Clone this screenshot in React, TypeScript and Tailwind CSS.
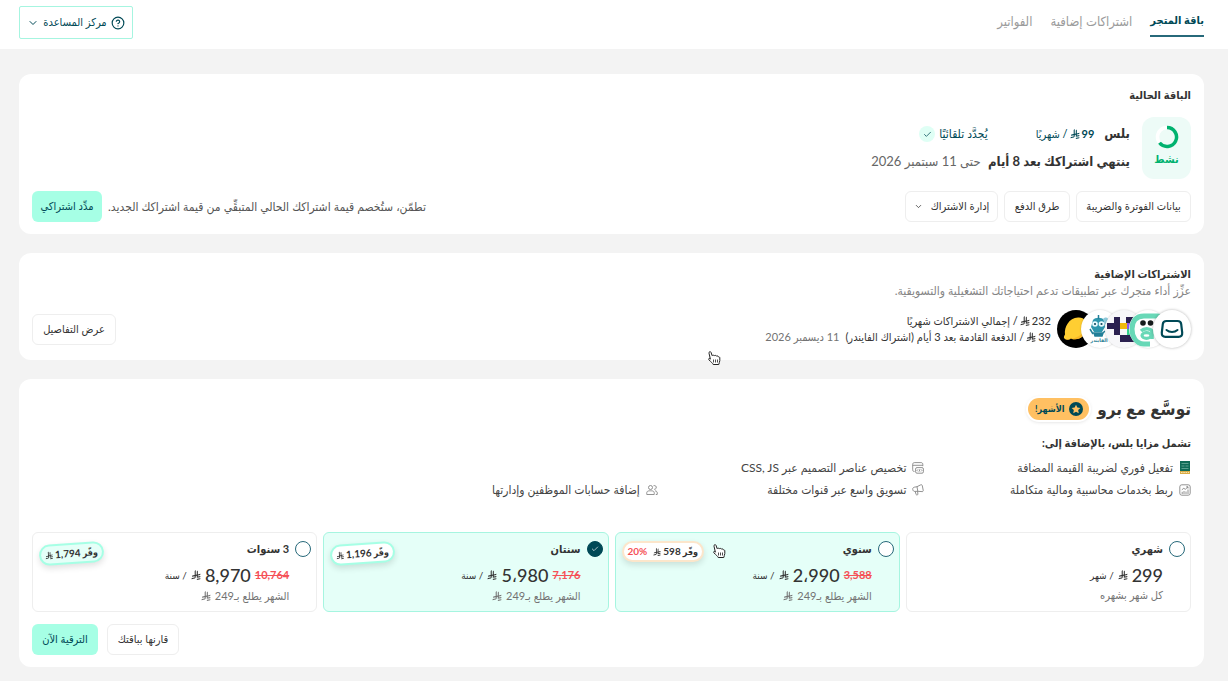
import { useState } from 'react';
import type { ReactNode } from 'react';
import clsx from 'clsx';
import { Check, ChevronDown, CircleHelp } from 'lucide-react';

type Plan = {
  id: string;
  name: string;
  price: string;
  oldPrice?: string;
  unit: string;
  note: ReactNode;
  saving?: string;
  discount?: string;
};

function Riyal({ className }: { className?: string }) {
  return (
    <svg viewBox="0 0 1124 1257" fill="currentColor" aria-hidden="true" className={clsx('inline-block shrink-0', className)}>
      <path d="M699.62,1113.02c-20.06,44.48-33.32,92.75-38.4,143.37l424.51-90.24c20.06-44.47,33.31-92.75,38.4-143.37l-424.51,90.24Z" />
      <path d="M1085.73,895.8c20.06-44.47,33.32-92.75,38.4-143.37l-330.68,70.33v-135.2l292.27-62.11c20.06-44.47,33.32-92.75,38.4-143.37l-330.68,70.27V66.13c-50.67,28.45-95.67,66.32-132.25,110.99v403.35l-132.25,28.11V0c-50.67,28.44-95.67,66.32-132.25,110.99v525.69l-295.91,62.88c-20.06,44.47-33.33,92.75-38.42,143.37l334.33-71.05v170.26l-358.3,76.14c-20.06,44.47-33.32,92.75-38.4,143.37l375.04-79.7c30.53-6.35,56.77-24.4,73.83-49.24l68.78-101.97v-.02c7.14-10.55,11.3-23.27,11.3-36.97v-149.98l132.25-28.11v270.4l424.53-90.28Z" />
    </svg>
  );
}

function HandPointer({ className }: { className?: string }) {
  return (
    <svg viewBox="0 0 14 16" aria-hidden="true" className={clsx('pointer-events-none absolute h-4 w-3.5', className)}>
      <path
        d="M3.4 9.2 2 3.2C1.7 1.6 3.6 1 4.1 2.5l1 3.2c.6-.8 1.8-.7 2.1.1.7-.7 1.8-.5 2.1.3.7-.5 1.8-.2 2 .7.8-.2 1.5.3 1.5 1.2v2.6c0 1.6-1 2.3-1 3.9H6.2c-.5-1.5-2.3-2.5-4.2-4.6-1-1.2.4-2.3 1.4-.7Z"
        fill="#fff"
        stroke="#222"
        strokeLinejoin="round"
      />
      <path d="M6.5 9.5v3M8.5 9.5v3M10.5 9.5v3" stroke="#222" strokeWidth=".8" />
    </svg>
  );
}

const avatar = 'h-[38px] w-[38px] shrink-0 rounded-full';

function AppLogos() {
  return (
    <div className="flex items-center">
      <svg viewBox="0 0 38 38" className={clsx(avatar, 'z-50 bg-white shadow-[0_0_3px_rgba(0,0,0,0.3)]')}>
        <path d="M13.5 11h11c2.500 0 3.500 1.200 3.700 3.200l1 8.400c.2 2.800-1 4.200-3.600 4.200H12.400c-2.600 0-3.800-1.400-3.600-4.200l1-8.400c.2-2 1.200-3.200 3.700-3.200Z" fill="none" stroke="#004956" strokeWidth="2.200" />
        <path d="M13.500 20c3 2.600 8 2.600 11 0" fill="none" stroke="#004956" strokeWidth="2" strokeLinecap="round" />
      </svg>
      <svg viewBox="0 0 38 38" className={clsx(avatar, 'z-40 -ms-3.5 bg-white shadow-[0_0_2px_rgba(0,0,0,0.2)]')}>
        <path d="M33 6H15C7 6 3 11 3 19s4 15 12 15h6" fill="none" stroke="#68d8b7" strokeWidth="5" />
        <circle cx="14" cy="13" r="2.800" fill="#151b1b" />
        <circle cx="21.500" cy="13" r="2.800" fill="#151b1b" />
        <path d="M12 21c3-3 11-3 11 1v7" fill="none" stroke="#68d8b7" strokeWidth="3.500" />
        <ellipse cx="17.500" cy="25.500" rx="4.500" ry="2.800" fill="none" stroke="#68d8b7" strokeWidth="3.200" />
      </svg>
      <svg viewBox="0 0 38 38" className={clsx(avatar, 'z-30 -ms-3.5 bg-[#f7f7f9] shadow-[0_0_2px_rgba(0,0,0,0.2)]')}>
        <path d="M9 7h6v6H9zM2 13h13v6H2zM9 19h6v6H9zM15 25h14v7H15zM21 7h7v6h-7z" fill="#2b2150" />
        <path d="M15 13h7v6h-7z" fill="#f0b90c" />
        <path d="M22 13h6v6h-6z" fill="#9257ee" />
        <path d="M22 19h6v6h-6z" fill="#35d690" />
      </svg>
      <svg viewBox="0 0 38 38" className={clsx(avatar, 'z-20 -ms-3.5 bg-white shadow-[0_0_2px_rgba(0,0,0,0.2)]')}>
        <path d="M12 10c2-3 9-3 11 0l1 7-3 5H13l-3-5Z" fill="#2e96ad" />
        <path d="M17.500 5v4M9 19l3 5M24 21l-4 4M13 23h9l-1 3h-7Z" stroke="#237f98" fill="#237f98" strokeWidth="1.500" />
        <path d="M22 9c3-3 6-1 5 2l-3 4Z" fill="#8fc9da" />
        <circle cx="14" cy="14" r="2.800" fill="#e9fbff" />
        <circle cx="20.500" cy="14" r="2.800" fill="#e9fbff" />
        <circle cx="14" cy="14" r="1.100" fill="#124b60" />
        <circle cx="20.500" cy="14" r="1.100" fill="#124b60" />
        <text x="18" y="32" textAnchor="middle" fontSize="5" fontWeight="700" fill="#287d92">الفايندر</text>
      </svg>
      <svg viewBox="0 0 38 38" className={clsx(avatar, 'z-10 -ms-3.5')}>
        <rect width="38" height="38" fill="#000" />
        <path d="M8 29c-1.500-1-1.500-2.500 0-4.500C7 17 12 8 21 7.500c6-.5 10 4 9 10.500-1 8-9 13.500-16 10.500-2 1.500-4 1.500-6 .5Z" fill="#ffce32" />
        <path d="M8 29c9 1 17-3 22-11-1 8-9 13.500-16 10.500-2 1.500-4 1.500-6 .5Z" fill="#f7b526" />
      </svg>
    </div>
  );
}

function TaxIcon() {
  return (
    <svg viewBox="0 0 12 14" className="h-3.5 w-3" aria-hidden="true">
      <rect x="1" width="10" height="10" fill="#106b57" />
      <path d="M2.500 2.500h7M2.500 5h3M6.500 5h3M2.500 7.500h7" stroke="#6fae9d" strokeWidth=".8" />
      <rect x="1" y="10" width="10" height="3" fill="#d9ab45" />
      <path d="M2 11.500h8" stroke="#fff2cb" strokeWidth=".8" strokeDasharray="1.500 .8" />
    </svg>
  );
}

function ReportIcon() {
  return (
    <svg viewBox="0 0 12 12" fill="none" stroke="currentColor" strokeWidth=".8" className="h-3 w-3" aria-hidden="true">
      <rect x=".8" y=".8" width="10.400" height="10.400" rx="2" />
      <path d="M3.200 10V7.800M5 10V7M7 10V7.500M9 10V5.500M2.800 5.800l2-1.500 1.500 1L9 2.800M7.200 2.800H9v1.700" />
    </svg>
  );
}

function CodeIcon() {
  return (
    <svg viewBox="0 0 12 12" fill="none" stroke="currentColor" strokeWidth=".8" className="h-3 w-3" aria-hidden="true">
      <path d="M2.500 9.500C1.200 9.500.7 9 .7 7.700V2.500C.7 1.200 1.300.6 2.600.6h6.300c1.300 0 1.900.6 1.900 1.900v1.700M.7 3.300h10" />
      <rect x="3.600" y="5.600" width="7.800" height="5.600" rx="1.400" />
      <path d="M6 7.400 5 8.400l1 1M9 7.400l1 1-1 1M7.700 7.300l-.4 2.200" />
    </svg>
  );
}

function MegaphoneIcon() {
  return (
    <svg viewBox="0 0 12 12" fill="none" stroke="currentColor" strokeWidth=".8" strokeLinejoin="round" className="h-3 w-3" aria-hidden="true">
      <path d="M5 2.700 8.600.9c.9-.4 1.500-.1 1.700.8l.9 4.500c.2.9-.3 1.500-1.200 1.400L5.800 7.300M5 2.700l-2.700.5C1 3.500.5 4.400.8 5.700c.3 1.200 1 1.800 2.300 1.700l2.700-.1M5 2.700l.8 4.600M3.200 7.400l.9 3.100c.2.7 1.900.5 1.800-.3l-.3-2.900" />
    </svg>
  );
}

function StaffIcon() {
  return (
    <svg viewBox="0 0 12 12" fill="none" stroke="currentColor" strokeWidth=".8" className="h-3 w-3" aria-hidden="true">
      <circle cx="4.500" cy="3.500" r="2" />
      <path d="M.8 10.500C.3 7 2 6.800 4.500 6.800S8.700 7 8.200 10.500ZM7.500 1.700c2-.6 3.200.8 2.700 2.300-.3 1-1.200 1.400-2.200 1.300M9 6.800c2 .2 2.600 1.500 2.200 3.700H9.800" />
    </svg>
  );
}

const features = [
  { label: 'تفعيل فوري لضريبة القيمة المضافة', icon: <TaxIcon />, place: 'col-start-1 row-start-1' },
  { label: 'تخصيص عناصر التصميم عبر CSS, JS', icon: <CodeIcon />, place: 'col-start-2 row-start-1' },
  { label: 'ربط بخدمات محاسبية ومالية متكاملة', icon: <ReportIcon />, place: 'col-start-1 row-start-2' },
  { label: 'تسويق واسع عبر قنوات مختلفة', icon: <MegaphoneIcon />, place: 'col-start-2 row-start-2' },
  { label: 'إضافة حسابات الموظفين وإدارتها', icon: <StaffIcon />, place: 'col-start-3 row-start-2' },
];

const perMonth = (
  <>
    الشهر يطلع بـ249 <Riyal className="h-2.5 w-2.5" />
  </>
);

const plans: Plan[] = [
  { id: 'month', name: 'شهري', price: '299', unit: 'شهر', note: 'كل شهر بشهره' },
  { id: 'year', name: 'سنوي', price: '2،990', oldPrice: '3,588', unit: 'سنة', note: perMonth, saving: '598', discount: '20%' },
  { id: 'two', name: 'سنتان', price: '5،980', oldPrice: '7,176', unit: 'سنة', note: perMonth, saving: '1,196' },
  { id: 'three', name: '3 سنوات', price: '8,970', oldPrice: '10,764', unit: 'سنة', note: perMonth, saving: '1,794' },
];

const outline =
  'flex h-[31px] items-center justify-center gap-2 whitespace-nowrap rounded-md border border-[#eeeeee] bg-white text-[11px] font-medium text-[#333]';
const solid =
  'flex h-[31px] items-center justify-center whitespace-nowrap rounded-md bg-[#a6ffe5] text-[11px] font-medium text-[#004956]';
const card = 'rounded-xl bg-white px-[13px] py-3';

function PlanCard({ plan, checked, onSelect }: { plan: Plan; checked: boolean; onSelect: () => void }) {
  const tinted = checked || plan.id === 'year';
  return (
    <label
      className={clsx(
        'relative flex h-20 cursor-pointer gap-1.5 rounded-md border px-[5px] pt-1.5',
        tinted ? 'border-[#a6f5e0] bg-[#e5fff8]' : 'border-[#eeeeee] bg-white'
      )}
    >
      <span className="relative mt-0.5 h-4 w-4 shrink-0">
        <input
          type="radio"
          name="plan"
          checked={checked}
          onChange={onSelect}
          className="block h-4 w-4 appearance-none rounded-full border border-[#27697a] bg-white checked:border-[#004956] checked:bg-[#004956]"
        />
        {checked && <Check size={8} className="pointer-events-none absolute top-1 left-1 text-white" />}
      </span>
      <span className="flex flex-col">
        <span className="text-[11px] leading-5 font-bold">{plan.name}</span>
        <span className="flex h-8 items-center gap-1">
          {plan.oldPrice && <del className="text-[11px] font-bold text-[#f55157]">{plan.oldPrice}</del>}
          <span className="text-[18px] font-medium">{plan.price}</span>
          <Riyal className="h-2.5 w-2.5" />
          <span className="text-[10px]">/ {plan.unit}</span>
        </span>
        <span className="flex items-center gap-1 text-[11px] leading-2 text-[#737373]">{plan.note}</span>
      </span>
      {plan.saving && (
        <span
          className={clsx(
            'absolute left-1.5 flex h-[21px] items-center gap-0.5 rounded-full border-2 px-1 text-[9px] font-bold whitespace-nowrap shadow-[0_3px_6px_rgba(0,0,0,0.12)]',
            plan.discount ? 'top-2 border-[#fce6cb] bg-white' : 'top-2.5 -rotate-4 border-[#a6ffe5]',
            plan.id === 'two' && 'bg-white',
            plan.id === 'three' && 'bg-[#e5fff8]'
          )}
        >
          <span>وفّر</span>
          <span className="text-[10px]">{plan.saving}</span>
          <Riyal className="h-2 w-2" />
          {plan.discount && <span className="ms-1 text-[10px] text-[#f55157]">{plan.discount}</span>}
        </span>
      )}
      {plan.id === 'year' && <HandPointer className="top-2.5 left-24" />}
    </label>
  );
}

export default function App() {
  const [selected, setSelected] = useState('two');

  return (
    <div
      dir="rtl"
      className="relative min-h-screen bg-[#f3f3f3] font-[Lato,'DejaVu_Sans_Condensed','DejaVu_Sans',sans-serif] text-[#333]"
    >
      <header className="flex h-[49px] justify-between bg-white ps-6 pe-[19px]">
        <nav className="flex items-start gap-[18px] pt-2 text-[13px] text-[#9b9b9b]">
          <a href="#plan" aria-current="page" className="border-b-2 border-[#27697a] pt-1 pb-2 text-[11px] leading-[15px] font-bold text-[#004956]">
            باقة المتجر
          </a>
          <a href="#extras" className="pt-1.5 leading-[15px]">اشتراكات إضافية</a>
          <a href="#invoices" className="pt-1.5 leading-[15px]">الفواتير</a>
        </nav>
        <button
          type="button"
          className="mt-1.5 flex h-[33px] w-[114px] items-center justify-center gap-1 rounded-xs border border-[#a6f5e0] text-[11px] font-medium whitespace-nowrap text-[#004956]"
        >
          <CircleHelp size={14} />
          مركز المساعدة
          <ChevronDown size={12} />
        </button>
      </header>

      <main className="flex flex-col gap-[19px] ps-6 pe-[19px] pt-[25px] pb-3.5">
        <section id="plan" className={card}>
          <h2 className="mb-[13px] text-[11px] leading-[18px] font-bold">الباقة الحالية</h2>
          <div className="flex gap-3">
            <div className="flex h-[62px] w-[49px] flex-col items-center rounded-xl bg-[#edfbf7] pt-2 text-[#00b26f]">
              <svg viewBox="0 0 24 24" className="h-6 w-6" fill="none" strokeWidth="3.500" aria-hidden="true">
                <circle cx="12" cy="12" r="9.500" stroke="#fff" />
                <path d="M12 2.500a9.500 9.500 0 1 1-7.500 15.300" stroke="currentColor" />
              </svg>
              <span className="mt-0.5 text-[11px] leading-4 font-bold">نشط</span>
            </div>
            <div className="flex flex-col pt-1">
              <div className="flex h-[26px] items-center text-[11px] font-medium text-[#004956]">
                <span className="text-[13px] font-bold text-[#333]">بلس</span>
                <span className="ms-2.5 flex items-center gap-0.5">
                  <span className="font-bold">99</span>
                  <Riyal className="h-2.5 w-2.5" />
                  <span>/ شهريًا</span>
                </span>
                <span className="ms-12 text-xs">يُجدَّد تلقائيًا</span>
                <span className="ms-1 flex h-4 w-4 items-center justify-center rounded-full bg-[#dffff5]">
                  <Check size={9} />
                </span>
              </div>
              <p className="text-[13px] leading-7">
                <strong>ينتهي اشتراكك بعد 8 أيام</strong>{' '}
                <span className="ms-1 text-[#666]">حتى 11 سبتمبر 2026</span>
              </p>
            </div>
          </div>
          <div className="mt-3 flex items-center justify-between">
            <div className="flex gap-1.5">
              <button type="button" className={clsx(outline, 'w-[115px]')}>بيانات الفوترة والضريبة</button>
              <button type="button" className={clsx(outline, 'w-[66px]')}>طرق الدفع</button>
              <button type="button" className={clsx(outline, 'w-[93px]')}>
                إدارة الاشتراك
                <ChevronDown size={9} />
              </button>
            </div>
            <div className="flex items-center gap-1.5">
              <p className="text-xs text-[#555]">تطمّن، ستُخصم قيمة اشتراكك الحالي المتبقِّي من قيمة اشتراكك الجديد.</p>
              <button type="button" className={clsx(solid, 'w-[70px]')}>مدِّد اشتراكي</button>
            </div>
          </div>
        </section>

        <section id="extras" className={card}>
          <h2 className="text-[11px] leading-[18px] font-bold">الاشتراكات الإضافية</h2>
          <p className="text-xs leading-4 text-[#858585]">عزِّز أداء متجرك عبر تطبيقات تدعم احتياجاتك التشغيلية والتسويقية.</p>
          <div className="mt-[11px] flex items-center justify-between">
            <div className="flex items-center gap-1.5">
              <AppLogos />
              <div className="text-[11px] leading-4">
                <p className="flex items-center gap-0.5 font-medium">
                  <span>232</span>
                  <Riyal className="h-2.5 w-2.5" />
                  <span>/ إجمالي الاشتراكات شهريًا</span>
                </p>
                <p className="flex items-center gap-0.5">
                  <span>39</span>
                  <Riyal className="h-2.5 w-2.5" />
                  <span>/ الدفعة القادمة بعد 3 أيام (اشتراك الفايندر)</span>
                  <span className="ms-1 text-[#737373]">11 ديسمبر 2026</span>
                </p>
              </div>
            </div>
            <button type="button" className={clsx(outline, 'w-[84px]')}>عرض التفاصيل</button>
          </div>
        </section>

        <section className={card}>
          <div className="flex h-9 items-center gap-2">
            <h2 className="text-[17px] font-bold">توسَّع مع برو</h2>
            <span className="flex h-[22px] w-[61px] items-center justify-center gap-1 rounded-full bg-[#ffc062] text-[9px] font-bold text-[#004956] shadow-[0_0_0_2px_#fff,0_1px_4px_rgba(0,0,0,0.25)]">
              <svg viewBox="0 0 24 24" className="h-3.5 w-3.5 shrink-0" aria-hidden="true">
                <circle cx="12" cy="12" r="12" fill="#004956" />
                <path d="m12 4.500 2.300 4.900 5.200.7-3.800 3.700 1 5.300-4.700-2.600-4.700 2.600 1-5.300-3.800-3.700 5.200-.7Z" fill="#ffc062" />
              </svg>
              الأشهر!
            </span>
          </div>
          <h3 className="mt-[7px] text-[11px] leading-[18px] font-bold">تشمل مزايا بلس، بالإضافة إلى:</h3>
          <ul className="mt-[5px] grid w-[69%] grid-cols-3 text-xs leading-[22px]">
            {features.map((feature) => (
              <li key={feature.label} className={clsx('flex items-center gap-1.5 whitespace-nowrap text-[#444]', feature.place)}>
                <span className="flex w-3 shrink-0 justify-center text-[#777]">{feature.icon}</span>
                {feature.label}
              </li>
            ))}
          </ul>
          <div className="mt-[31px] grid grid-cols-4 gap-1.5">
            {plans.map((plan) => (
              <PlanCard key={plan.id} plan={plan} checked={selected === plan.id} onSelect={() => setSelected(plan.id)} />
            ))}
          </div>
          <div className="mt-3 flex justify-end gap-[9px]">
            <button type="button" className={clsx(outline, 'w-[72px]')}>قارنها بباقتك</button>
            <button type="button" className={clsx(solid, 'w-[66px]')}>الترقية الآن</button>
          </div>
        </section>
      </main>
      <HandPointer className="top-[350px] left-[707px]" />
    </div>
  );
}
